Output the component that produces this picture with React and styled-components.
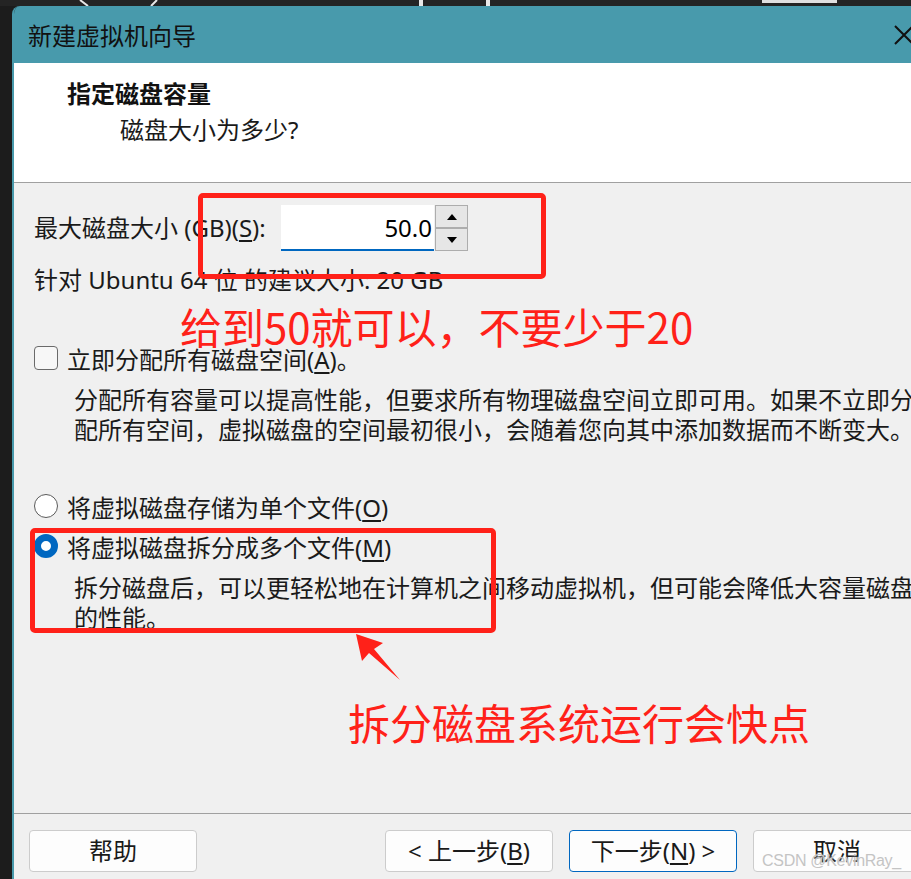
import React from 'react';
import styled, { createGlobalStyle } from 'styled-components';

const GlobalStyle = createGlobalStyle`
  html, body {
    margin: 0;
    padding: 0;
    background: #1c1c1c;
    overflow: hidden;
  }
  #root {
    width: 911px;
    height: 879px;
  }
`;

const UI_FONT = `"Noto Sans", "Noto Sans CJK SC", sans-serif`;
const NOTE_FONT = `"Noto Sans CJK SC", sans-serif`;
const RED = '#ff2119';

const Screen = styled.div`
  position: relative;
  width: 911px;
  height: 879px;
  overflow: hidden;
  background: #1c1c1c;
  font-family: ${UI_FONT};
  color: #1a1a1a;
`;

const Wallpaper = styled.svg`
  display: block;
  width: 911px;
  height: 6px;
`;

const Window = styled.div`
  width: 928px;
  height: 873px;
  margin-left: 12px;
  border-left: 2px solid #489aac;
  border-top-left-radius: 8px;
  overflow: hidden;
  display: flex;
  flex-direction: column;
`;

const TitleBar = styled.div`
  height: 57px;
  flex-shrink: 0;
  background: #489aac;
  display: flex;
  align-items: center;
  padding: 0 28px 0 14px;
  font-size: 24px;
  color: #111;
`;

const CloseIcon = styled.svg`
  margin-left: auto;
  width: 20px;
  height: 20px;
`;

const Header = styled.div`
  height: 120px;
  flex-shrink: 0;
  box-sizing: border-box;
  background: #ffffff;
  border-bottom: 1px solid #a0a0a0;
  padding: 16px 0 0 53px;
`;

const Heading = styled.div`
  font-size: 24px;
  line-height: 30px;
  font-weight: 700;
  color: #111;
`;

const SubHeading = styled.div`
  margin: 6px 0 0 53px;
  font-size: 24px;
  line-height: 30px;
`;

const Body = styled.div`
  height: 630px;
  flex-shrink: 0;
  background: #f0f0f0;
  padding: 22px 0 0 20px;
  box-sizing: border-box;
  font-size: 24px;
`;

const SizeRow = styled.div`
  display: flex;
  align-items: center;
  height: 46px;
`;

const SizeLabel = styled.label`
  width: 247px;
  line-height: 30px;
`;

const Key = styled.span`
  text-decoration: underline;
  text-underline-offset: 3px;
`;

const Field = styled.input`
  width: 153px;
  height: 46px;
  box-sizing: border-box;
  border: none;
  border-bottom: 2px solid #0067c0;
  background: #ffffff;
  text-align: right;
  padding: 0 2px 0 0;
  font-family: ${UI_FONT};
  font-size: 24px;
  color: #000;
  outline: none;
`;

const Spinner = styled.div`
  margin-left: 1px;
  width: 33px;
  height: 46px;
  display: flex;
  flex-direction: column;
`;

const SpinButton = styled.div`
  flex: 1;
  border: 1px solid #adadad;
  background: #e6e6e6;
  display: flex;
  align-items: center;
  justify-content: center;

  &::after {
    content: '';
    border-left: 5px solid transparent;
    border-right: 5px solid transparent;
    ${({ $dir }) =>
      $dir === 'up'
        ? 'border-bottom: 6px solid #000;'
        : 'border-top: 6px solid #000;'}
  }
`;

const Line = styled.div`
  margin-top: ${({ $top }) => $top}px;
  line-height: 30px;
`;

const OptionRow = styled.div`
  margin-top: ${({ $top }) => $top}px;
  display: flex;
  align-items: center;
  gap: 9px;
  height: 30px;
`;

const CheckBox = styled.span`
  width: 24px;
  height: 24px;
  box-sizing: border-box;
  border: 1px solid #6a6a6a;
  border-radius: 4px;
  background: #f7f7f7;
`;

const Radio = styled.span`
  width: 24px;
  height: 24px;
  box-sizing: border-box;
  border-radius: 50%;
  border: ${({ $on }) => ($on ? '7px solid #0067c0' : '1px solid #5a5a5a')};
  background: #ffffff;
`;

const Desc = styled.div`
  margin: ${({ $top }) => $top}px 0 0 40px;
  width: 848px;
  line-height: 30px;
`;

const Footer = styled.div`
  flex: 1;
  background: #f0f0f0;
  border-top: 1px solid #a0a0a0;
  display: flex;
  align-items: flex-start;
  padding: 16px 21px 0 15px;
`;

const ButtonGroup = styled.div`
  margin-left: auto;
  display: flex;
  gap: 16px;
`;

const Button = styled.button`
  width: 168px;
  height: 42px;
  box-sizing: border-box;
  border: 1px solid ${({ $primary }) => ($primary ? '#0067c0' : '#cccccc')};
  border-radius: 4px;
  background: #fdfdfd;
  font-family: ${UI_FONT};
  font-size: 24px;
  line-height: 30px;
  color: #1a1a1a;
  padding: 0;
`;

const RedBox = styled.div`
  position: absolute;
  box-sizing: border-box;
  border: 5px solid ${RED};
  border-radius: 5px;
`;

const RedNote = styled.div`
  position: absolute;
  font-family: ${NOTE_FONT};
  font-size: 42px;
  line-height: 50px;
  color: ${RED};
  white-space: nowrap;
`;

const Arrow = styled.svg`
  position: absolute;
  left: 0;
  top: 0;
`;

const Watermark = styled.div`
  position: absolute;
  left: 762px;
  top: 852px;
  font-family: "Liberation Sans", sans-serif;
  font-size: 16px;
  letter-spacing: -0.3px;
  color: #c4c4c4;
  text-shadow: 0 0 2px rgba(255, 255, 255, 0.8);
  white-space: nowrap;
`;

export default function App() {
  return (
    <>
      <GlobalStyle />
      <Screen>
        <Wallpaper viewBox="0 0 911 6">
          <rect x="0" y="0" width="911" height="6" fill="#242424" />
          <path d="M80 0 L88 6" stroke="#e8e8e8" strokeWidth="2" />
          <path d="M157 0 L151 6" stroke="#e8e8e8" strokeWidth="2" />
          <rect x="419" y="0" width="4" height="6" fill="#e8e8e8" />
          <rect x="486" y="0" width="4" height="6" fill="#e8e8e8" />
          <rect x="762" y="0" width="75" height="3" fill="#e0e0e0" />
        </Wallpaper>

        <Window>
          <TitleBar>
            新建虚拟机向导
            <CloseIcon viewBox="0 0 20 20">
              <path d="M1 1 L19 19 M19 1 L1 19" stroke="#111" strokeWidth="2" />
            </CloseIcon>
          </TitleBar>

          <Header>
            <Heading>指定磁盘容量</Heading>
            <SubHeading>磁盘大小为多少?</SubHeading>
          </Header>

          <Body>
            <SizeRow>
              <SizeLabel>
                最大磁盘大小 (GB)(<Key>S</Key>):
              </SizeLabel>
              <Field defaultValue="50.0" readOnly />
              <Spinner>
                <SpinButton $dir="up" />
                <SpinButton $dir="down" />
              </Spinner>
            </SizeRow>
            <Line $top={14}>针对 Ubuntu 64 位 的建议大小: 20 GB</Line>

            <OptionRow $top={48}>
              <CheckBox />
              <span>
                立即分配所有磁盘空间(<Key>A</Key>)。
              </span>
            </OptionRow>
            <Desc $top={12}>
              分配所有容量可以提高性能，但要求所有物理磁盘空间立即可用。如果不立即分配所有空间，虚拟磁盘的空间最初很小，会随着您向其中添加数据而不断变大。
            </Desc>

            <OptionRow $top={46}>
              <Radio />
              <span>
                将虚拟磁盘存储为单个文件(<Key>O</Key>)
              </span>
            </OptionRow>
            <OptionRow $top={10}>
              <Radio $on />
              <span>
                将虚拟磁盘拆分成多个文件(<Key>M</Key>)
              </span>
            </OptionRow>
            <Desc $top={12}>
              拆分磁盘后，可以更轻松地在计算机之间移动虚拟机，但可能会降低大容量磁盘的性能。
            </Desc>
          </Body>

          <Footer>
            <Button>帮助</Button>
            <ButtonGroup>
              <Button>
                &lt; 上一步(<Key>B</Key>)
              </Button>
              <Button $primary>
                下一步(<Key>N</Key>) &gt;
              </Button>
              <Button>取消</Button>
            </ButtonGroup>
          </Footer>
        </Window>

        <RedBox style={{ left: 198, top: 193, width: 348, height: 86 }} />
        <RedNote style={{ left: 180, top: 301 }}>给到50就可以，不要少于20</RedNote>
        <RedBox style={{ left: 30, top: 528, width: 466, height: 105 }} />
        <Arrow width="911" height="879" viewBox="0 0 911 879">
          <polygon
            points="356,634 383,643 374,649 400,680 369,653 362,661"
            fill={RED}
          />
        </Arrow>
        <RedNote style={{ left: 348, top: 697 }}>拆分磁盘系统运行会快点</RedNote>
        <Watermark>CSDN @KevinRay_</Watermark>
      </Screen>
    </>
  );
}
